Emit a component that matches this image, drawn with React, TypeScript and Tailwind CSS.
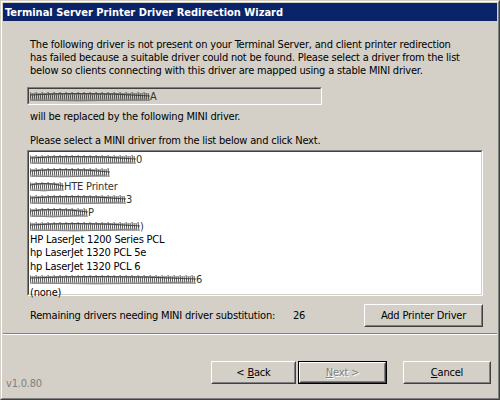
import React from 'react';

const font = { fontFamily: '"DejaVu Sans Condensed", "Liberation Sans", sans-serif' };

function Scribble({ w, tail }: { w: number; tail?: string }) {
  // redacted text: dense hand-drawn hatching
  const pts: string[] = [];
  for (let x = 0; x < w; x += 2) {
    pts.push(`M${x} ${2 + (x % 6 === 0 ? 0 : 1)} L${x + 1} 11`);
  }
  return (
    <span className="inline-flex items-center">
      <svg width={w} height={13} viewBox={`0 0 ${w} 13`} className="block">
        <path d={pts.join(' ')} stroke="#1a1a1a" strokeWidth="0.9" fill="none" opacity="0.85" />
        <path d={`M0 5 Q ${w / 2} 2 ${w} 6`} stroke="#333" strokeWidth="1.2" fill="none" opacity="0.8" />
        <path d={`M2 10 Q ${w / 2} 12 ${w - 4} 9`} stroke="#777" strokeWidth="1.2" fill="none" opacity="0.7" />
      </svg>
      {tail && <span className="text-[#333]">{tail}</span>}
    </span>
  );
}

function Btn({ children, def, className = '' }: { children: React.ReactNode; def?: boolean; className?: string }) {
  const inner = (
    <div className="h-full border border-t-white border-l-white border-b-[#404040] border-r-[#404040]">
      <div className="h-full flex items-center justify-center border border-t-[#d4d0c8] border-l-[#d4d0c8] border-b-[#808080] border-r-[#808080]">
        {children}
      </div>
    </div>
  );
  return def ? (
    <div className={`border border-black ${className}`}>{inner}</div>
  ) : (
    <div className={className}>{inner}</div>
  );
}

const items: { text?: string; w?: number; tail?: string }[] = [
  { w: 106, tail: '0' },
  { w: 80 },
  { w: 34, tail: 'HTE Printer' },
  { w: 96, tail: '3' },
  { w: 58, tail: 'P' },
  { w: 110, tail: ')' },
  { text: 'HP LaserJet 1200 Series PCL' },
  { text: 'hp LaserJet 1320 PCL 5e' },
  { text: 'hp LaserJet 1320 PCL 6' },
  { w: 166, tail: '6' },
  { text: '(none)' },
];

export default function App() {
  return (
    <div
      className="w-[500px] h-[400px] bg-[#d4d0c8] text-black text-[11px] leading-[13px] tracking-[-0.2px]"
      style={font}
    >
      <div className="h-full flex flex-col border border-t-[#d4d0c8] border-l-[#d4d0c8] border-b-[#404040] border-r-[#404040]">
        <div className="flex-1 flex flex-col border border-t-white border-l-white border-b-[#808080] border-r-[#808080] p-px">
          <div className="h-[18px] bg-[#0a246a] text-white font-bold text-[11px] tracking-normal flex items-center pl-[2px]">
            Terminal Server Printer Driver Redirection Wizard
          </div>

          <div className="pl-[24px] pr-[14px] pt-[17px] flex flex-col">
            <p className="pl-[3px] whitespace-nowrap">
              The following driver is not present on your Terminal Server, and client printer redirection
              <br />
              has failed because a suitable driver could not be found. Please select a driver from the list
              <br />
              below so clients connecting with this driver are mapped using a stable MINI driver.
            </p>

            <div className="mt-[10px] w-[295px] h-[18px] border border-t-[#808080] border-l-[#808080] border-b-white border-r-white">
              <div className="h-full border border-t-[#404040] border-l-[#404040] border-b-[#d4d0c8] border-r-[#d4d0c8] flex items-center pl-px">
                <Scribble w={120} tail="A" />
              </div>
            </div>

            <div className="pl-[3px] mt-[5px]">will be replaced by the following MINI driver.</div>
            <div className="pl-[3px] mt-[11px]">Please select a MINI driver from the list below and click Next.</div>

            <div className="mt-[3px] h-[146px] border border-t-[#808080] border-l-[#808080] border-b-white border-r-white">
              <div className="h-full bg-white border border-t-[#404040] border-l-[#404040] border-b-[#d4d0c8] border-r-[#d4d0c8] pt-[1px] pl-[1px]">
                {items.map((it, i) => (
                  <div key={i} className="h-[13.3px] flex items-center">
                    {it.text ? it.text : <Scribble w={it.w!} tail={it.tail} />}
                  </div>
                ))}
              </div>
            </div>

            <div className="mt-[8px] flex items-center">
              <div className="pl-[3px] w-[266px]">Remaining drivers needing MINI driver substitution:</div>
              <div className="flex-1">26</div>
              <Btn className="w-[119px] h-[23px]">Add Printer Driver</Btn>
            </div>
          </div>

          <div className="mt-[6px] border-t border-t-[#808080] border-b border-b-white" />

          <div className="flex-1 flex items-end justify-between pl-[3px] pr-[6px] pb-[13px]">
            <div className="text-[#808080] mb-[-6px]">v1.0.80</div>
            <div className="flex items-center">
              <Btn className="w-[85px] h-[23px]">
                <span>
                  &lt; <u>B</u>ack
                </span>
              </Btn>
              <Btn def className="ml-[2px] w-[89px] h-[23px]">
                <span className="text-[#808080]" style={{ textShadow: '1px 1px 0 #fff' }}>
                  <u>N</u>ext &gt;
                </span>
              </Btn>
              <Btn className="ml-[16px] w-[88px] h-[23px]">
                <span>
                  <u>C</u>ancel
                </span>
              </Btn>
            </div>
          </div>
        </div>
      </div>
    </div>
  );
}
